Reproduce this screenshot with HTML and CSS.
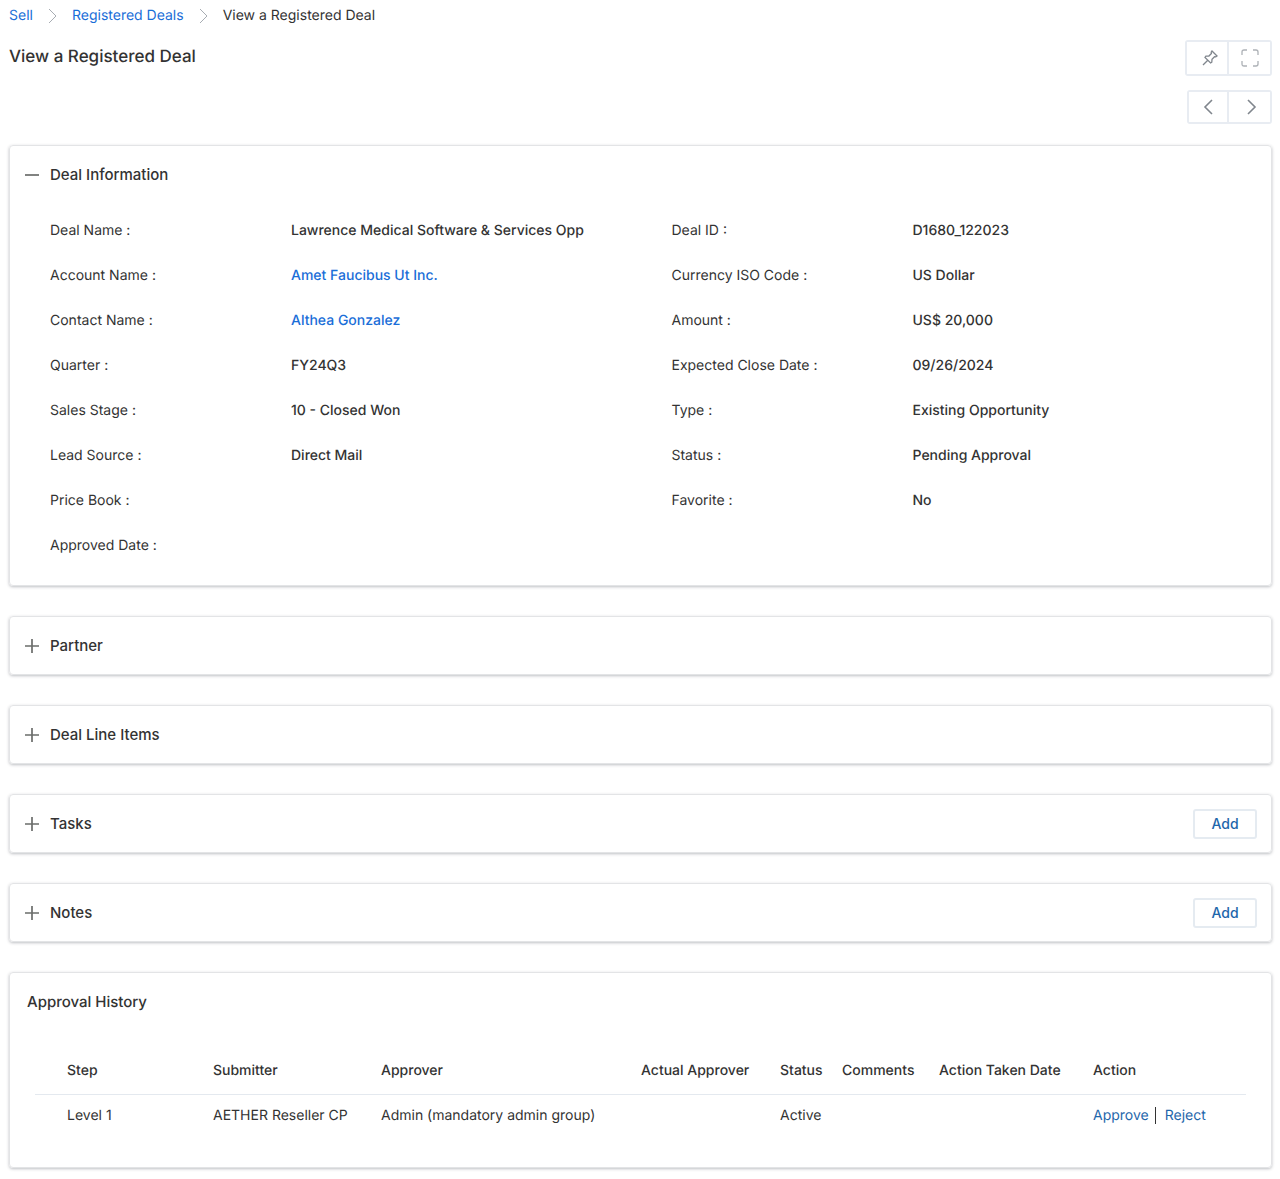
FILE: index.html
```html
<!DOCTYPE html>
<html lang="en">
  <head>
    <meta charset="UTF-8" />
    <meta name="viewport" content="width=device-width, initial-scale=1.0" />
    <title>View a Registered Deal</title>
    <link rel="stylesheet" href="styles.css">
  </head>
  <body>
    <nav class="breadcrumb" aria-label="Breadcrumb">
      <a href="#">Sell</a>
      <svg class="separator" viewBox="0 0 10 16"><path d="M1 1l7 7-7 7" /></svg>
      <a href="#">Registered Deals</a>
      <svg class="separator" viewBox="0 0 10 16"><path d="M1 1l7 7-7 7" /></svg>
      <span>View a Registered Deal</span>
    </nav>

    <header class="page-header">
      <h1>View a Registered Deal</h1>
      <div class="toolbar">
        <div class="button-group">
          <button type="button" class="pin" aria-label="Pin">
            <svg class="icon" viewBox="0 0 16 16">
              <path d="M10 1l5 5-1.200 .8-1.300-.1-2.500 2.500-.2 3-1.200 .8-5.600-5.600 .9-1.200 3-.2 2.500-2.500-.2-1.300zM5.800 10.200L1 15" />
            </svg>
          </button>
          <button type="button" aria-label="Full screen">
            <svg class="icon icon-expand" viewBox="0 0 18 18">
              <path d="M1 6V3q0-2 2-2h3M12 1h3q2 0 2 2v3M17 12v3q0 2-2 2h-3M6 17H3q-2 0-2-2v-3" />
            </svg>
          </button>
        </div>
        <div class="button-group pager">
          <button type="button" aria-label="Previous">
            <svg class="arrow" viewBox="0 0 10 16"><path d="M9 1L2 8l7 7" /></svg>
          </button>
          <button type="button" class="next" aria-label="Next">
            <svg class="arrow" viewBox="0 0 10 16"><path d="M1 1l7 7-7 7" /></svg>
          </button>
        </div>
      </div>
    </header>

    <main>
      <section class="card">
        <div class="card-header">
          <button type="button" class="toggle" aria-expanded="true">
            <svg viewBox="0 0 14 14"><path d="M0 7h14" /></svg>
            Deal Information
          </button>
        </div>
        <dl class="details">
          <dt>Deal Name :</dt>
          <dd>Lawrence Medical Software &amp; Services Opp</dd>
          <dt>Deal ID :</dt>
          <dd>D1680_122023</dd>
          <dt>Account Name :</dt>
          <dd><a href="#">Amet Faucibus Ut Inc.</a></dd>
          <dt>Currency ISO Code :</dt>
          <dd>US Dollar</dd>
          <dt>Contact Name :</dt>
          <dd><a href="#">Althea Gonzalez</a></dd>
          <dt>Amount :</dt>
          <dd>US$ 20,000</dd>
          <dt>Quarter :</dt>
          <dd>FY24Q3</dd>
          <dt>Expected Close Date :</dt>
          <dd>09/26/2024</dd>
          <dt>Sales Stage :</dt>
          <dd>10 - Closed Won</dd>
          <dt>Type :</dt>
          <dd>Existing Opportunity</dd>
          <dt>Lead Source :</dt>
          <dd>Direct Mail</dd>
          <dt>Status :</dt>
          <dd>Pending Approval</dd>
          <dt>Price Book :</dt>
          <dd></dd>
          <dt>Favorite :</dt>
          <dd>No</dd>
          <dt>Approved Date :</dt>
          <dd></dd>
        </dl>
      </section>

      <section class="card">
        <div class="card-header">
          <button type="button" class="toggle" aria-expanded="false">
            <svg viewBox="0 0 14 14"><path d="M0 7h14M7 0v14" /></svg>
            Partner
          </button>
        </div>
      </section>

      <section class="card">
        <div class="card-header">
          <button type="button" class="toggle" aria-expanded="false">
            <svg viewBox="0 0 14 14"><path d="M0 7h14M7 0v14" /></svg>
            Deal Line Items
          </button>
        </div>
      </section>

      <section class="card">
        <div class="card-header">
          <button type="button" class="toggle" aria-expanded="false">
            <svg viewBox="0 0 14 14"><path d="M0 7h14M7 0v14" /></svg>
            Tasks
          </button>
          <button type="button" class="add">Add</button>
        </div>
      </section>

      <section class="card">
        <div class="card-header">
          <button type="button" class="toggle" aria-expanded="false">
            <svg viewBox="0 0 14 14"><path d="M0 7h14M7 0v14" /></svg>
            Notes
          </button>
          <button type="button" class="add">Add</button>
        </div>
      </section>

      <section class="card history">
        <h2>Approval History</h2>
        <table>
          <colgroup>
            <col class="col-step" />
            <col class="col-submitter" />
            <col class="col-approver" />
            <col class="col-actual" />
            <col class="col-status" />
            <col class="col-comments" />
            <col class="col-date" />
            <col />
          </colgroup>
          <thead>
            <tr>
              <th>Step</th>
              <th>Submitter</th>
              <th>Approver</th>
              <th>Actual Approver</th>
              <th>Status</th>
              <th>Comments</th>
              <th>Action Taken Date</th>
              <th>Action</th>
            </tr>
          </thead>
          <tbody>
            <tr>
              <td>Level 1</td>
              <td>AETHER Reseller CP</td>
              <td>Admin (mandatory admin group)</td>
              <td></td>
              <td>Active</td>
              <td></td>
              <td></td>
              <td><a href="#">Approve</a><a href="#" class="reject">Reject</a></td>
            </tr>
          </tbody>
        </table>
      </section>
    </main>
  </body>
</html>
```
FILE: styles.css
```css
* {
  box-sizing: border-box;
}

body {
  margin: 0;
  padding: 6px 8px 12px 9px;
  background: #fff;
  color: #333;
  font-family: Inter, "Liberation Sans", sans-serif;
  font-size: 14px;
  line-height: 20px;
  text-rendering: geometricPrecision;
}

a {
  color: #1a6ed8;
  text-decoration: none;
}

button {
  font: inherit;
  color: inherit;
  background: #fff;
  cursor: pointer;
}

svg {
  display: block;
  fill: none;
  stroke: currentColor;
}

.breadcrumb {
  display: flex;
  align-items: center;
}

.separator {
  width: 10px;
  height: 16px;
  margin: 0 14px 0 15px;
  color: #a8adb3;
}

.page-header {
  display: flex;
  justify-content: space-between;
  padding-top: 14px;
}

h1 {
  margin: 5px 0 0;
  font-size: 17px;
  font-weight: 500;
  line-height: 24px;
}

.toolbar {
  display: flex;
  flex-direction: column;
  align-items: flex-end;
  gap: 14px;
}

.button-group {
  display: flex;
  border: 2px solid #e8ecf2;
  border-radius: 3px;
}

.button-group button {
  display: flex;
  align-items: center;
  justify-content: center;
  width: 43px;
  height: 32px;
  padding: 0;
  border: 0;
  color: #80868d;
}

.button-group button + button {
  border-left: 2px solid #e8ecf2;
}

.button-group .pin {
  width: 40px;
  padding-left: 6px;
}

.pager button {
  height: 30px;
}

.pager button:first-child {
  width: 38px;
}

.button-group .next {
  padding-left: 4px;
}

.icon {
  width: 16px;
  height: 16px;
  stroke-width: 1.3;
}

.icon-expand {
  width: 18px;
  height: 18px;
  color: #adb1b6;
}

.arrow {
  width: 10px;
  height: 16px;
  stroke-width: 1.6;
}

main {
  display: flex;
  flex-direction: column;
  gap: 30px;
  margin-top: 21px;
}

.card {
  border: 1px solid #e3e4e6;
  border-radius: 4px;
  box-shadow: 0 1px 3px rgba(40, 45, 60, 0.3);
}

.card-header {
  display: flex;
  align-items: center;
  justify-content: space-between;
  height: 57px;
  padding: 0 14px 0 15px;
}

.toggle {
  display: flex;
  align-items: center;
  gap: 11px;
  padding: 0;
  border: 0;
  font-size: 15px;
  font-weight: 500;
}

.toggle svg {
  width: 14px;
  height: 14px;
  stroke: #6b6d6b;
  stroke-width: 1.7;
}

.add {
  width: 64px;
  height: 30px;
  padding: 0;
  border: 2px solid #e5ebf1;
  border-radius: 3px;
  color: #1e66ab;
  font-weight: 500;
}

.details {
  display: grid;
  grid-template-columns: 241px 381fr 241px 359fr;
  margin: 0;
  padding: 5px 0 17px 40px;
  line-height: 45px;
}

dd {
  margin: 0;
  font-weight: 500;
}

.history {
  padding: 17px 25px 30px;
}

h2 {
  margin: 0 0 32px -8px;
  font-size: 15px;
  font-weight: 500;
  line-height: 24px;
}

table {
  width: 100%;
  table-layout: fixed;
  border-collapse: collapse;
}

th,
td {
  padding: 11px 0;
  text-align: left;
  white-space: nowrap;
}

th {
  padding: 15px 0 13px;
  border-bottom: 1px solid #e4e9ef;
  font-weight: 500;
}

th:first-child,
td:first-child {
  padding-left: 32px;
}

td a {
  color: #1e66ab;
}

.reject {
  margin-left: 6px;
  padding-left: 9px;
  border-left: 1px solid #333;
}

.col-step {
  width: 178px;
}

.col-submitter {
  width: 168px;
}

.col-approver {
  width: 260px;
}

.col-actual {
  width: 139px;
}

.col-status {
  width: 62px;
}

.col-comments {
  width: 97px;
}

.col-date {
  width: 154px;
}
```
